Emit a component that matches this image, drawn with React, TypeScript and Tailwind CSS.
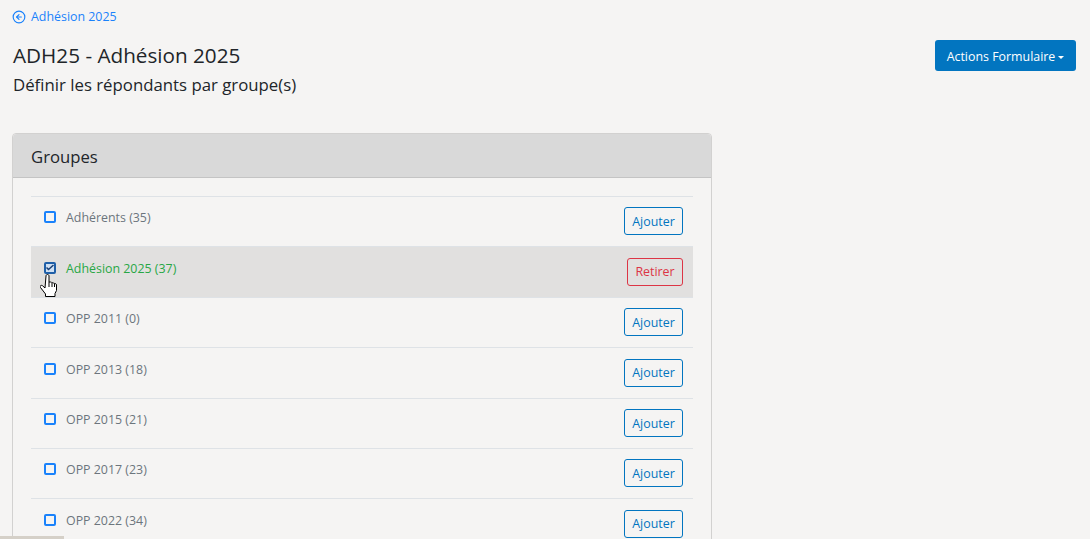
import { CircleArrowLeft } from "lucide-react";

const groups = [
  { name: "Adhérents (35)", active: false },
  { name: "Adhésion 2025 (37)", active: true },
  { name: "OPP 2011 (0)", active: false },
  { name: "OPP 2013 (18)", active: false },
  { name: "OPP 2015 (21)", active: false },
  { name: "OPP 2017 (23)", active: false },
  { name: "OPP 2022 (34)", active: false },
];

function HandCursor() {
  return (
    <svg className="absolute left-[-4px] top-[12px]" width="17" height="23" viewBox="0 0 17 23">
      <path
        d="M6 2c0 -2 3 -2 3 0v6h1.500c0.800 0 1.300 0.300 1.500 0.800c0.700 -0.300 1.800 -0.100 2 0.700c0.800 -0.200 2.500 0 2.500 1.500v5.500l-1.500 3v3h-9.500v-2.500l-5 -6.500c-1 -1.500 0.500 -2.800 2 -1.800l2.500 2.300z"
        fill="#fff"
        stroke="#000"
        strokeWidth="1"
      />
      <path d="M9 8v5M12 9v4M14.500 10v3" stroke="#000" strokeWidth="1" fill="none" />
    </svg>
  );
}

function GroupRow({ name, active }: { name: string; active: boolean }) {
  return (
    <div className={`flex h-[50.4px] border-t border-[#dee2e6] pl-[13px] pr-[10px] ${active ? "bg-[#e1e0df]" : ""}`}>
      <div className="relative mt-[14.4px] h-[12px] w-[12px] shrink-0">
        <div
          className={`flex h-[12px] w-[12px] items-center justify-center rounded-[2px] border-2 ${
            active ? "border-[#1f5fa8] bg-[#cfe0f3]" : "border-[#1a82fb]"
          }`}
        >
          {active && (
            <svg width="8" height="7" viewBox="0 0 8 7">
              <path d="M0.500 3.500l2 2l5 -4.500" stroke="#1b3f73" strokeWidth="1.500" fill="none" />
            </svg>
          )}
        </div>
        {active && <HandCursor />}
      </div>
      <span className={`ml-[10px] mt-[11.4px] text-[12.4px] leading-[19px] ${active ? "text-[#28a745]" : "text-[#6c757d]"}`}>
        {name}
      </span>
      <div className="ml-auto mt-[10.4px]">
        {active ? (
          <button className="h-[28px] w-[56px] rounded-[3px] border border-[#dc3545] text-[12.4px] text-[#dc3545]">Retirer</button>
        ) : (
          <button className="h-[28px] w-[59px] rounded-[3px] border border-[#0275c0] pt-[2px] text-[12.4px] text-[#0275c0]">Ajouter</button>
        )}
      </div>
    </div>
  );
}

export default function App() {
  return (
    <div className="relative h-[539px] overflow-hidden bg-[#f5f4f3] font-['Open_Sans',sans-serif] text-[#212529]">
      <div className="flex items-start justify-between pl-[13px] pr-[14px]">
        <div>
          <a className="mt-[8px] flex h-[18px] items-center gap-[5px] text-[12.4px] text-[#1a82fb]">
            <CircleArrowLeft size={14} strokeWidth={2} className="-ml-[1px]" />
            Adhésion 2025
          </a>
          <h1 className="mt-[15px] text-[20.7px] font-normal leading-[28px]">ADH25 - Adhésion 2025</h1>
          <h2 className="mt-[4px] text-[16.8px] leading-[24px]">Définir les répondants par groupe(s)</h2>
        </div>
        <button className="mt-[40px] flex h-[31px] w-[141px] items-center justify-center rounded-[3px] bg-[#0275c0] pt-[3px] text-[12.4px] text-white">
          Actions Formulaire
          <span className="ml-[3px] h-0 w-0 border-x-[3px] border-t-[3px] border-x-transparent border-t-white" />
        </button>
      </div>

      <div className="ml-[12px] mt-[36px] w-[700px] rounded-t-[4px] border border-[#d2d1d0]">
        <div className="flex h-[44px] items-center rounded-t-[4px] border-b border-[#c4c4c4] bg-[#d9d9d9] pl-[18px] pt-[2px] text-[16.7px]">
          Groupes
        </div>
        <div className="px-[18px] pt-[18px]">
          {groups.map((group) => (
            <GroupRow key={group.name} name={group.name} active={group.active} />
          ))}
        </div>
      </div>

      <div className="absolute bottom-0 left-0 h-[3px] w-[64px] bg-[#d5d0c8]" />
    </div>
  );
}
